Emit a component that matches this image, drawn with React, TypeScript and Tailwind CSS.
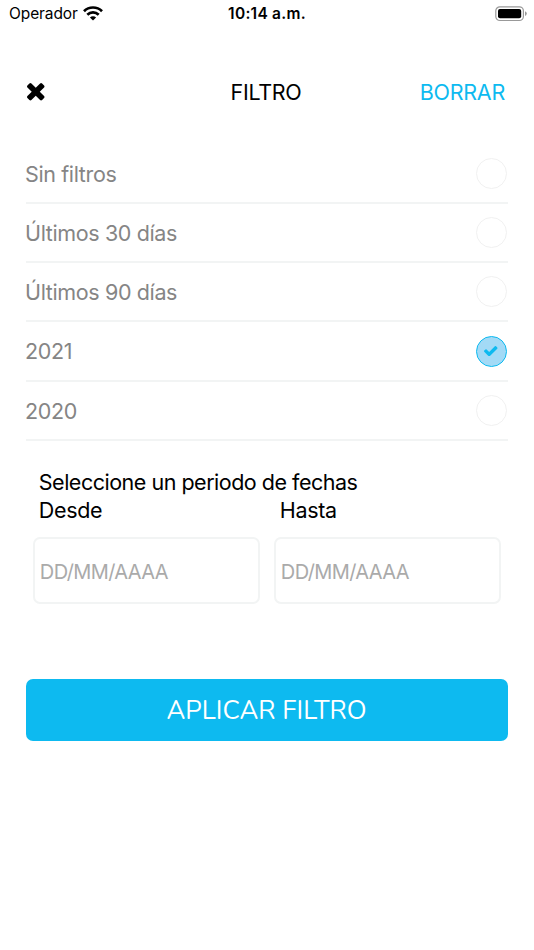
const options = [
  { label: 'Sin filtros' },
  { label: 'Últimos 30 días' },
  { label: 'Últimos 90 días' },
  { label: '2021', selected: true },
  { label: '2020' },
];

function Wifi() {
  return (
    <svg className="mb-[2px]" width="20" height="15" viewBox="0 0 20 15" fill="none" stroke="#000" strokeWidth="2.7">
      <path d="M1 5.2A12.8 12.8 0 0 1 19 5.2" />
      <path d="M4.3 8.7A8.2 8.2 0 0 1 15.7 8.7" />
      <path d="M10 14.6 6.9 11.5A4.4 4.4 0 0 1 13.1 11.5Z" fill="#000" stroke="none" />
    </svg>
  );
}

function Battery() {
  return (
    <svg className="mb-px" width="32" height="16" viewBox="0 0 32 16">
      <rect x="0.8" y="0.8" width="27.6" height="13.7" rx="4" fill="none" stroke="#999" strokeWidth="1.2" />
      <rect x="3" y="3" width="23.2" height="9.3" rx="2" fill="#000" />
      <path d="M30 5.2Q31.8 6 31.8 7.6T30 10Z" fill="#999" />
    </svg>
  );
}

function Close() {
  return (
    <svg width="17.5" height="17.5" viewBox="302 366 1188 1188">
      <path d="M1490 1322q0 40-28 68l-136 136q-28 28-68 28t-68-28l-294-294-294 294q-28 28-68 28t-68-28l-136-136q-28-28-28-68t28-68l294-294-294-294q-28-28-28-68t28-68l136-136q28-28 68-28t68 28l294 294 294-294q28-28 68-28t68 28l136 136q28 28 28 68t-28 68l-294 294 294 294q28 28 28 68z" />
    </svg>
  );
}

function Check() {
  return (
    <svg width="13.5" height="10.4" viewBox="121 334 1550 1188" fill="#0dbaf0">
      <path d="M1671 566q0 40-28 68l-724 724-136 136q-28 28-68 28t-68-28l-136-136-362-362q-28-28-28-68t28-68l136-136q28-28 68-28t68 28l294 295 656-657q28-28 68-28t68 28l136 136q28 28 28 68z" />
    </svg>
  );
}

function DateField({ label }: { label: string }) {
  return (
    <label className="block w-[227.5px]">
      <span className="block pl-1.5 text-[21.5px] leading-7 tracking-[-0.35px] text-black">{label}</span>
      <input
        placeholder="DD/MM/AAAA"
        className="mt-[13px] block h-[67px] w-full rounded-[7px] border-2 border-[#f2f4f4] bg-white px-[5px] pt-[3px] text-[20px] tracking-[-0.6px] text-black outline-none placeholder:text-[#aaaaaa]"
      />
    </label>
  );
}

export default function App() {
  return (
    <div className="h-[950px] w-[534px] overflow-hidden bg-white font-['Inter','Liberation_Sans',sans-serif] text-black">
      <div className="grid h-7 grid-cols-3 items-center pl-[9px] pr-[7px]">
        <div className="flex items-center gap-[5px]">
          <span className="text-[15.5px] tracking-[-0.1px]">Operador</span>
          <Wifi />
        </div>
        <span className="pr-[2px] text-center text-[15.5px] font-semibold tracking-[0.25px]">10:14 a.m.</span>
        <div className="flex justify-end">
          <Battery />
        </div>
      </div>

      <header className="mt-[48px] grid h-8 grid-cols-3 items-center pl-[27px] pr-[29px]">
        <button aria-label="Cerrar" className="w-fit"><Close /></button>
        <h1 className="text-center text-[21.5px] tracking-[-0.3px]">FILTRO</h1>
        <button className="text-right text-[21.5px] tracking-[-0.25px] text-[#0dbaf0]">BORRAR</button>
      </header>

      <ul className="ml-[26px] mt-[36.5px] w-[482px]">
        {options.map((option) => (
          <li key={option.label} className="flex h-[59.3px] items-center justify-between border-b-2 border-[#f2f4f4] pr-[1.5px]">
            <span className="-ml-px pt-[1px] text-[21.5px] tracking-[-0.37px] text-[#858585]">{option.label}</span>
            <span
              className={`flex size-[31px] items-center justify-center rounded-full border ${
                option.selected ? 'border-[#0dbaf0] bg-[#a3daf6]' : 'border-[#f1f1f1] bg-white'
              }`}
            >
              {option.selected && <Check />}
            </span>
          </li>
        ))}
      </ul>

      <section className="mt-[27px] pl-[32.8px] pr-[32px]">
        <h2 className="whitespace-nowrap pl-1.5 text-[21.5px] leading-7 tracking-[-0.49px]">Seleccione un periodo de fechas</h2>
        <div className="flex gap-[13.5px]">
          <DateField label="Desde" />
          <DateField label="Hasta" />
        </div>
      </section>

      <button className="ml-[26px] mt-[74.8px] flex h-[62px] w-[482px] items-center justify-center rounded-[7px] bg-[#0dbaf0] pr-px pt-[3px] font-['Nunito','Lato',sans-serif] text-[25.8px] tracking-[0.05px] text-white">
        APLICAR FILTRO
      </button>
    </div>
  );
}
